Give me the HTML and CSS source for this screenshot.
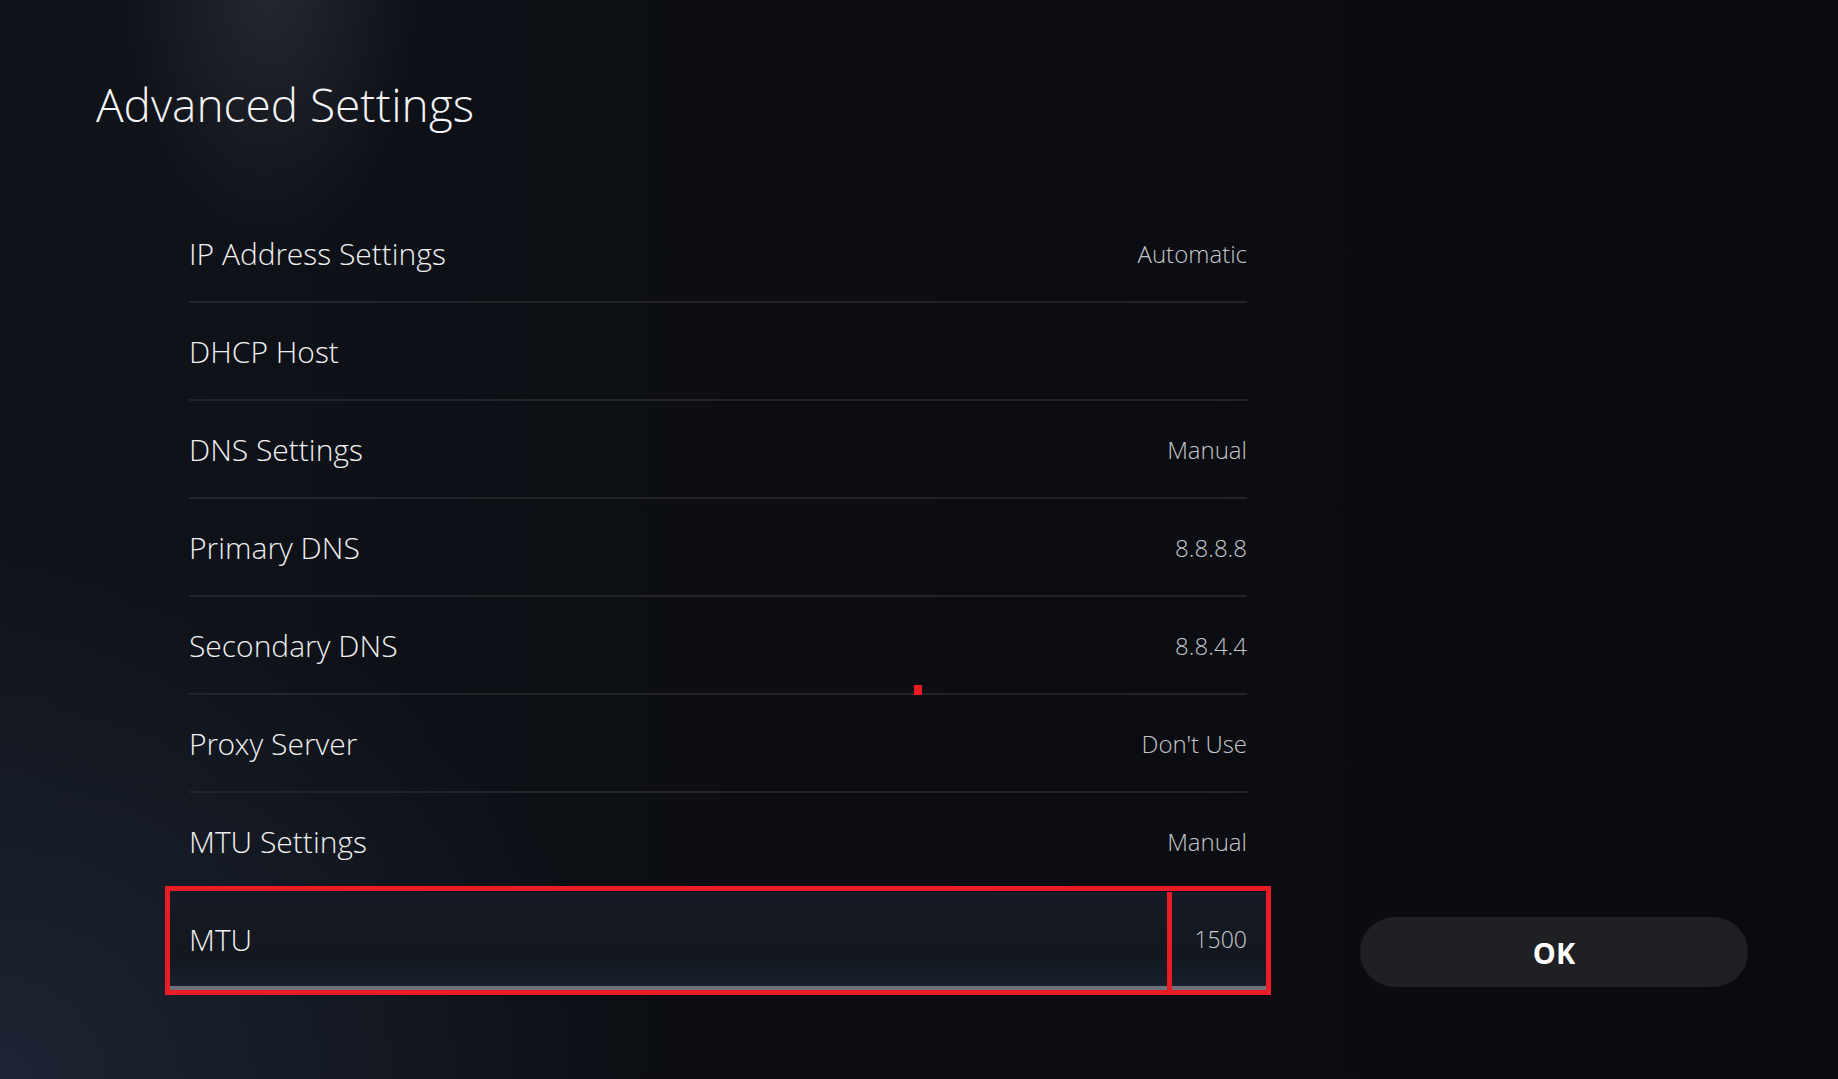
FILE: index.html
```html
<!DOCTYPE html>
<html lang="en">
<head>
    <meta charset="UTF-8">
    <meta name="viewport" content="width=device-width, initial-scale=1.0">
    <title>Advanced Settings</title>
    <link rel="stylesheet" href="styles.css">
</head>
<body>
    <div class="screen">
        <h1 class="screen-title">Advanced Settings</h1>

        <div class="screen-body">
            <!-- Settings list -->
            <div class="settings-list">
                <div class="settings-row">
                    <span class="row-label">IP Address Settings</span>
                    <span class="row-value">Automatic</span>
                </div>
                <div class="settings-row">
                    <span class="row-label">DHCP Host</span>
                    <span class="row-value"></span>
                </div>
                <div class="settings-row">
                    <span class="row-label">DNS Settings</span>
                    <span class="row-value">Manual</span>
                </div>
                <div class="settings-row">
                    <span class="row-label">Primary DNS</span>
                    <span class="row-value">8.8.8.8</span>
                </div>
                <div class="settings-row">
                    <span class="row-label">Secondary DNS</span>
                    <span class="row-value">8.8.4.4</span>
                </div>
                <div class="settings-row">
                    <span class="row-label">Proxy Server</span>
                    <span class="row-value">Don't Use</span>
                </div>
                <div class="settings-row">
                    <span class="row-label">MTU Settings</span>
                    <span class="row-value">Manual</span>
                </div>
                <div class="settings-row focused">
                    <span class="row-label">MTU</span>
                    <span class="row-value mtu-value">1500</span>
                    <span class="mark-line"></span>
                </div>

                <span class="mark-dot"></span>
            </div>

            <!-- Actions -->
            <div class="actions">
                <button class="ok-btn">OK</button>
            </div>
        </div>
    </div>
</body>
</html>
```

FILE: styles.css
```css
html, body {
    margin: 0;
    padding: 0;
}

body {
    font-family: "Open Sans Light", "Open Sans", "Noto Sans", sans-serif;
    color: #f2f2f4;
    width: 1838px;
    height: 1079px;
    overflow: hidden;
    background-color: #0a0c11;
    background-image:
        radial-gradient(ellipse 150px 280px at 270px -30px, rgba(56, 60, 68, 0.55), rgba(56, 60, 68, 0) 100%),
        radial-gradient(ellipse 620px 520px at 0px 1079px, rgba(30, 40, 56, 0.85), rgba(30, 40, 56, 0) 100%),
        linear-gradient(90deg, #10131a 0%, #0c0e14 40%, #0a0b10 100%);
}

.screen {
    padding: 77px 0 0 96px;
}

.screen-title {
    margin: 0;
    font-size: 46px;
    font-weight: 300;
    line-height: 54px;
    color: #f4f4f6;
}

.screen-body {
    display: flex;
    align-items: flex-end;
    margin-top: 74px;
}

.settings-list {
    position: relative;
    width: 1058px;
    margin-left: 93px;
}

.settings-row {
    display: flex;
    align-items: center;
    justify-content: space-between;
    height: 96px;
    border-bottom: 2px solid #22242a;
}

.row-label {
    font-size: 30px;
    font-weight: 300;
    color: #f0f0f2;
}

.row-value {
    font-size: 24px;
    font-weight: 300;
    color: #c6c7cb;
}

.mtu-value {
    font-size: 23px;
}

.settings-row.focused {
    position: relative;
    margin: 1px -19px 0;
    padding: 0 19px;
    height: 94px;
    border-bottom: 4px solid #6f727c;
    background: linear-gradient(180deg, #151a24 0%, #121720 70%, #18202b 100%);
}

/* red annotation box */
.settings-row.focused::after {
    content: "";
    position: absolute;
    top: -6px;
    left: -5px;
    right: -5px;
    bottom: -9px;
    border: 5px solid #ec1c24;
}

.mark-line {
    position: absolute;
    top: 0;
    bottom: -9px;
    left: 997px;
    width: 5px;
    background-color: #ec1c24;
}

.mark-dot {
    position: absolute;
    left: 725px;
    top: 480px;
    width: 8px;
    height: 10px;
    background-color: #ec1c24;
}

.actions {
    margin-left: 113px;
    margin-bottom: 3px;
}

.ok-btn {
    display: block;
    width: 388px;
    height: 70px;
    border: none;
    border-radius: 35px;
    background-color: #1f2024;
    color: #fff;
    font-family: "Open Sans", "Noto Sans", sans-serif;
    font-size: 29px;
    font-weight: 700;
    cursor: pointer;
}
```
